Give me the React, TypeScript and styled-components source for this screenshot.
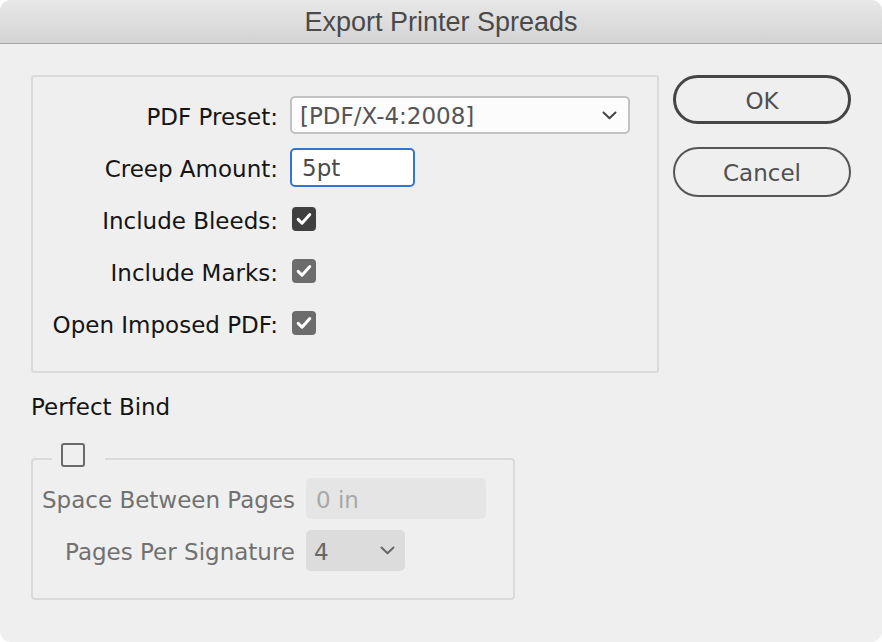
import styled, { createGlobalStyle } from "styled-components"

const GlobalStyle = createGlobalStyle`
  html, body {
    margin: 0;
    padding: 0;
    background: #ffffff;
  }
  * {
    box-sizing: border-box;
  }
`

const font = `"DejaVu Sans", "Noto Sans", sans-serif`

function Chevron({ color = "#444" }: { color?: string }) {
  return (
    <svg width="15" height="9" viewBox="0 0 15 9">
      <path d="M1.5 1.5 L7.5 7.2 L13.5 1.5" fill="none" stroke={color} strokeWidth="2" strokeLinecap="round" strokeLinejoin="round" />
    </svg>
  )
}

function Check({ shade }: { shade: "dark" | "mid" }) {
  return (
    <CheckBox shade={shade}>
      <svg width="24" height="24" viewBox="0 0 24 24">
        <path d="M6.2 12.4 L10 16.2 L17.8 7.6" fill="none" stroke="#fff" strokeWidth="3" strokeLinecap="round" strokeLinejoin="round" />
      </svg>
    </CheckBox>
  )
}

export default function App() {
  return (
    <>
      <GlobalStyle />
      <Window>
        <TitleBar>Export Printer Spreads</TitleBar>
        <Body>
          <Main>
            <GroupBox>
              <Label>PDF Preset:</Label>
              <Select>
                <span>[PDF/X-4:2008]</span>
                <Chevron />
              </Select>

              <Label>Creep Amount:</Label>
              <TextInput>5pt</TextInput>

              <Label>Include Bleeds:</Label>
              <Check shade="dark" />

              <Label>Include Marks:</Label>
              <Check shade="mid" />

              <Label>Open Imposed PDF:</Label>
              <Check shade="mid" />
            </GroupBox>

            <Heading>Perfect Bind</Heading>

            <BindSet>
              <Legend>
                <EmptyBox />
              </Legend>
              <BindGrid>
                <DimLabel>Space Between Pages</DimLabel>
                <DimInput>0 in</DimInput>

                <DimLabel>Pages Per Signature</DimLabel>
                <DimSelect>
                  <span>4</span>
                  <Chevron color="#666" />
                </DimSelect>
              </BindGrid>
            </BindSet>
          </Main>

          <Buttons>
            <Button primary>OK</Button>
            <Button>Cancel</Button>
          </Buttons>
        </Body>
      </Window>
    </>
  )
}

const Window = styled.div`
  width: 882px;
  height: 642px;
  background: #efefef;
  border-radius: 11px;
  overflow: hidden;
  font-family: ${font};
  font-size: 23px;
`

const TitleBar = styled.div`
  height: 44px;
  display: flex;
  align-items: center;
  justify-content: center;
  background: linear-gradient(#e8e8e8, #d3d3d3);
  border-bottom: 1px solid #a6a6a6;
  color: #4a4a4a;
  font-family: "Liberation Sans", Arial, sans-serif;
  font-size: 27px;
  padding-top: 2px;
`

const Body = styled.div`
  display: flex;
  gap: 14px;
  padding: 31px 0 0 31px;
`

const Main = styled.div`
  width: 628px;
  display: flex;
  flex-direction: column;
`

const GroupBox = styled.div`
  height: 298px;
  border: 2px solid #dadada;
  border-radius: 3px;
  display: grid;
  grid-template-columns: 245px 1fr;
  grid-auto-rows: 52px;
  align-items: center;
  column-gap: 12px;
  padding: 12px 0 0 0;
`

const Label = styled.div`
  text-align: right;
  color: #151515;
  white-space: nowrap;
  padding-top: 3px;
`

const Select = styled.div`
  width: 340px;
  height: 38px;
  display: flex;
  align-items: center;
  justify-content: space-between;
  padding: 2px 11px 0 8px;
  background: #fcfcfc;
  border: 2px solid #c2c2c2;
  border-radius: 5px;
  color: #555;

  svg {
    margin-top: -2px;
  }
`

const TextInput = styled.div`
  width: 125px;
  height: 39px;
  display: flex;
  align-items: center;
  padding: 2px 0 0 10px;
  background: #fff;
  border: 2px solid #2f77d4;
  border-radius: 5px;
  color: #4a4a4a;
`

const CheckBox = styled.div<{ shade: "dark" | "mid" }>`
  width: 24px;
  height: 24px;
  margin-left: 2px;
  border-radius: 4px;
  background: ${p => (p.shade === "dark" ? "#404040" : "#6c6c6c")};
  display: flex;

  svg {
    display: block;
  }
`

const Heading = styled.div`
  margin-top: 20px;
  color: #151515;
  line-height: 28px;
`

const BindSet = styled.fieldset`
  width: 484px;
  margin: 22px 0 0 0;
  padding: 0 0 27px 0;
  border: 2px solid #dadada;
  border-radius: 4px;
  min-width: 0;
`

const Legend = styled.legend`
  margin-left: 19px;
  padding: 0 20px 8px 9px;
  line-height: 0;
`

const EmptyBox = styled.div`
  width: 24px;
  height: 24px;
  border: 2px solid #6a6a6a;
  border-radius: 3px;
`

const BindGrid = styled.div`
  display: grid;
  grid-template-columns: 262px auto;
  column-gap: 11px;
  row-gap: 11px;
  align-items: center;
  justify-items: start;
  padding-top: 3px;
`

const DimLabel = styled.div`
  justify-self: end;
  color: #717171;
  white-space: nowrap;
  padding-top: 3px;
`

const DimInput = styled.div`
  width: 180px;
  height: 41px;
  display: flex;
  align-items: center;
  padding: 2px 0 0 10px;
  background: #e5e5e5;
  border-radius: 5px;
  color: #a8a8a8;
`

const DimSelect = styled.div`
  width: 99px;
  height: 41px;
  display: flex;
  align-items: center;
  justify-content: space-between;
  padding: 2px 10px 0 8px;
  background: #dcdcdc;
  border-radius: 5px;
  color: #666;

  svg {
    margin-top: -2px;
  }
`

const Buttons = styled.div`
  display: flex;
  flex-direction: column;
  gap: 23px;
`

const Button = styled.div<{ primary?: boolean }>`
  width: 178px;
  height: ${p => (p.primary ? "49px" : "50px")};
  display: flex;
  align-items: center;
  justify-content: center;
  border: ${p => (p.primary ? "3px solid #454545" : "2px solid #555")};
  border-radius: 25px;
  color: #505050;
  padding-top: 2px;
`
